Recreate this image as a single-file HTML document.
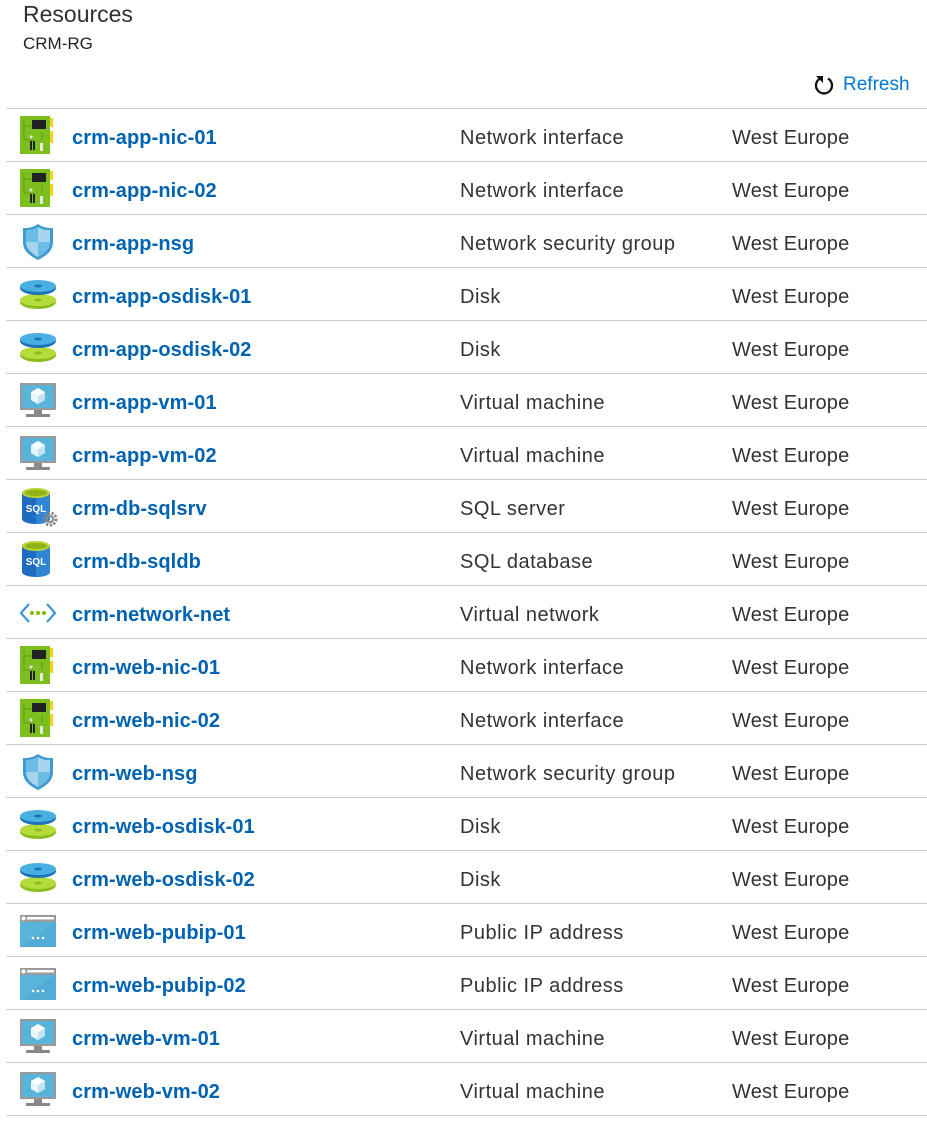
<!DOCTYPE html>
<html><head><meta charset="utf-8"><style>
body{margin:0;background:#fff;width:927px;height:1129px;position:relative;overflow:hidden;font-family:"Segoe UI","Liberation Sans",sans-serif}
.h1{position:absolute;left:23px;top:1px;font-size:23px;color:#323130}
.h2{position:absolute;left:23px;top:34px;font-size:17px;color:#222}
.ref{position:absolute;left:813px;top:74px;font-size:19px;color:#0078d4;display:flex;align-items:center}
.ref svg{margin-right:8px}
.list{position:absolute;left:6px;top:108px;width:921px;border-top:1px solid #ccc}
.row{height:52px;border-bottom:1px solid #ccc;position:relative}
.row svg{position:absolute;left:12px;top:7px}
.n{position:absolute;left:66px;top:18px;font-size:20px;font-weight:bold;color:#0063b1;letter-spacing:0.1px}
.t{position:absolute;left:454px;top:18px;font-size:20px;color:#333;letter-spacing:0.5px}
.r{position:absolute;left:726px;top:18px;font-size:20px;color:#333;letter-spacing:0.2px}
</style></head><body>
<svg width="0" height="0" style="position:absolute">
<defs>
<symbol id="nic" viewBox="0 0 40 40"><rect x="2" y="0" width="30" height="38" fill="#7cbf1f"/><rect x="32" y="2" width="3" height="9" fill="#fcd116"/><rect x="32" y="15" width="3" height="12" fill="#fcd116"/><path d="M6 4v20h10M6 10h12M24 16v8" stroke="#5f9c10" fill="none"/><rect x="14" y="4" width="14" height="9" fill="#222"/><circle cx="13" cy="21" r="1.6" fill="#ddd"/><rect x="12" y="25" width="2" height="9" fill="#222"/><rect x="15" y="25" width="2" height="9" fill="#222"/><rect x="22" y="27" width="3" height="8" fill="#e8e8e8"/></symbol>
<symbol id="nsg" viewBox="0 0 40 40"><path d="M20 2C14 6 10 6 5 6v14c0 9 7 14 15 18 8-4 15-9 15-18V6c-5 0-9 0-15-4z" fill="#3f9bd1"/><path d="M20 5C15 8 12 8 8 8v12c0 7 5 11 12 15 7-4 12-8 12-15V8c-4 0-7 0-12-3z" fill="#a4d4ee"/><path d="M20 5v15H8V8c4 0 7 0 12-3zM20 20h12c0 7-5 11-12 15z" fill="#6cbde6"/></symbol>
<symbol id="disk" viewBox="0 0 40 40"><ellipse cx="20" cy="27" rx="18" ry="7" fill="#8cbd1e"/><ellipse cx="20" cy="25" rx="18" ry="6" fill="#b5dc3a"/><ellipse cx="20" cy="25" rx="4" ry="1.5" fill="#8cbd1e"/><ellipse cx="20" cy="13" rx="18" ry="7" fill="#1e73b8"/><ellipse cx="20" cy="11" rx="18" ry="6" fill="#4ab0e2"/><ellipse cx="20" cy="11" rx="4" ry="1.5" fill="#1e73b8"/></symbol>
<symbol id="vm" viewBox="0 0 40 40"><rect x="2" y="2" width="36" height="27" fill="#999"/><rect x="4" y="4" width="32" height="23" fill="#59b4d9"/><path d="M20 7l7 4v8l-7 4-7-4v-8z" fill="#fff"/><path d="M20 15l7-4v8l-7 4z" fill="#c3e3f3"/><path d="M20 15v8l-7-4v-8z" fill="#e8f5fb"/><rect x="16" y="29" width="8" height="4" fill="#888"/><rect x="8" y="33" width="24" height="3" fill="#888"/></symbol>
<symbol id="sql" viewBox="0 0 40 40"><path d="M4 6v26c0 3 7 5 14 5s14-2 14-5V6z" fill="#1f6bbf"/><path d="M18 11v26c7 0 14-2 14-5V6z" fill="#2f86d4"/><ellipse cx="18" cy="6" rx="14" ry="5" fill="#b8d432"/><ellipse cx="18" cy="6" rx="11" ry="3" fill="#8fb319"/><text x="18" y="25" font-family="Liberation Sans,sans-serif" font-weight="bold" font-size="10" fill="#fff" text-anchor="middle">SQL</text></symbol>
<symbol id="gear" viewBox="0 0 40 40"><circle cx="32" cy="32" r="6" fill="none" stroke="#888" stroke-width="3" stroke-dasharray="2.2 1.5"/><circle cx="32" cy="32" r="3" fill="none" stroke="#888" stroke-width="2"/></symbol>
<symbol id="vnet" viewBox="0 0 40 40"><path d="M11 11l-8 9 8 9M29 11l8 9-8 9" stroke="#3a96dd" stroke-width="2.2" fill="none"/><circle cx="14" cy="20" r="2" fill="#7fba00"/><circle cx="20" cy="20" r="2" fill="#7fba00"/><circle cx="26" cy="20" r="2" fill="#7fba00"/></symbol>
<symbol id="ip" viewBox="0 0 40 40"><rect x="2" y="4" width="36" height="32" fill="#59b4d9"/><path d="M2 36l36-26v26z" fill="#4aa5cf" opacity=".5"/><rect x="2" y="4" width="36" height="7" fill="#999"/><rect x="9" y="6" width="27" height="2.5" fill="#fff"/><circle cx="5.5" cy="7.5" r="2" fill="#fff"/><circle cx="15" cy="27" r="1.3" fill="#fff"/><circle cx="20" cy="27" r="1.3" fill="#fff"/><circle cx="25" cy="27" r="1.3" fill="#fff"/></symbol>
</defs></svg>
<div class="h1">Resources</div>
<div class="h2">CRM-RG</div>
<div class="ref"><svg width="22" height="22" viewBox="0 0 22 22"><path d="M7 4.5A8 8 0 1 0 15 4.5" fill="none" stroke="#111" stroke-width="2.3"/><path d="M3 2h7v7z" fill="#111"/></svg>Refresh</div>
<div class="list">
<div class="row"><svg width="40" height="40"><use href="#nic"/></svg><span class="n">crm-app-nic-01</span><span class="t">Network interface</span><span class="r">West Europe</span></div>
<div class="row"><svg width="40" height="40"><use href="#nic"/></svg><span class="n">crm-app-nic-02</span><span class="t">Network interface</span><span class="r">West Europe</span></div>
<div class="row"><svg width="40" height="40"><use href="#nsg"/></svg><span class="n">crm-app-nsg</span><span class="t">Network security group</span><span class="r">West Europe</span></div>
<div class="row"><svg width="40" height="40"><use href="#disk"/></svg><span class="n">crm-app-osdisk-01</span><span class="t">Disk</span><span class="r">West Europe</span></div>
<div class="row"><svg width="40" height="40"><use href="#disk"/></svg><span class="n">crm-app-osdisk-02</span><span class="t">Disk</span><span class="r">West Europe</span></div>
<div class="row"><svg width="40" height="40"><use href="#vm"/></svg><span class="n">crm-app-vm-01</span><span class="t">Virtual machine</span><span class="r">West Europe</span></div>
<div class="row"><svg width="40" height="40"><use href="#vm"/></svg><span class="n">crm-app-vm-02</span><span class="t">Virtual machine</span><span class="r">West Europe</span></div>
<div class="row"><svg width="40" height="40"><use href="#sql"/><use href="#gear"/></svg><span class="n">crm-db-sqlsrv</span><span class="t">SQL server</span><span class="r">West Europe</span></div>
<div class="row"><svg width="40" height="40"><use href="#sql"/></svg><span class="n">crm-db-sqldb</span><span class="t">SQL database</span><span class="r">West Europe</span></div>
<div class="row"><svg width="40" height="40"><use href="#vnet"/></svg><span class="n">crm-network-net</span><span class="t">Virtual network</span><span class="r">West Europe</span></div>
<div class="row"><svg width="40" height="40"><use href="#nic"/></svg><span class="n">crm-web-nic-01</span><span class="t">Network interface</span><span class="r">West Europe</span></div>
<div class="row"><svg width="40" height="40"><use href="#nic"/></svg><span class="n">crm-web-nic-02</span><span class="t">Network interface</span><span class="r">West Europe</span></div>
<div class="row"><svg width="40" height="40"><use href="#nsg"/></svg><span class="n">crm-web-nsg</span><span class="t">Network security group</span><span class="r">West Europe</span></div>
<div class="row"><svg width="40" height="40"><use href="#disk"/></svg><span class="n">crm-web-osdisk-01</span><span class="t">Disk</span><span class="r">West Europe</span></div>
<div class="row"><svg width="40" height="40"><use href="#disk"/></svg><span class="n">crm-web-osdisk-02</span><span class="t">Disk</span><span class="r">West Europe</span></div>
<div class="row"><svg width="40" height="40"><use href="#ip"/></svg><span class="n">crm-web-pubip-01</span><span class="t">Public IP address</span><span class="r">West Europe</span></div>
<div class="row"><svg width="40" height="40"><use href="#ip"/></svg><span class="n">crm-web-pubip-02</span><span class="t">Public IP address</span><span class="r">West Europe</span></div>
<div class="row"><svg width="40" height="40"><use href="#vm"/></svg><span class="n">crm-web-vm-01</span><span class="t">Virtual machine</span><span class="r">West Europe</span></div>
<div class="row"><svg width="40" height="40"><use href="#vm"/></svg><span class="n">crm-web-vm-02</span><span class="t">Virtual machine</span><span class="r">West Europe</span></div>
</div>
</body></html>
